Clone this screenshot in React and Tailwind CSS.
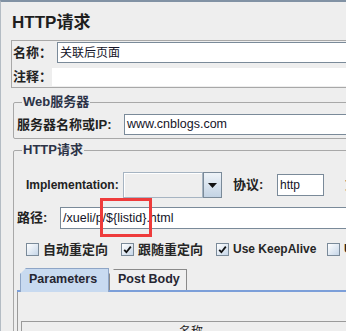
import React from "react";

const Field = ({ children, className = "" }) => (
  <div
    className={
      "flex items-center bg-white border border-[#7a8a99] px-[2px] text-[12.5px] text-[#141428] whitespace-nowrap overflow-hidden " +
      className
    }
  >
    {children}
  </div>
);

const CheckBox = ({ checked, label, className = "", textClass = "text-[13px]" }) => (
  <div className={"flex items-center gap-[4px] shrink-0 " + className}>
    <span className="w-[13px] h-[13px] border border-[#7a8a99] bg-linear-to-br from-white to-[#c6d6e8] flex items-center justify-center">
      {checked && (
        <svg width="9" height="9" viewBox="0 0 9 9">
          <path d="M1.2 4.8 L3.4 7.2 L7.8 1.6" stroke="#111" strokeWidth="1.8" fill="none" />
        </svg>
      )}
    </span>
    <span className={"leading-[15px] font-bold text-[#262626] whitespace-nowrap " + textClass}>{label}</span>
  </div>
);

export default function App() {
  return (
    <div className="w-[346px] h-[331px] overflow-hidden bg-[#eeeeee] border-t-2 border-t-[#8192a4] border-l border-l-[#b4bcc4] font-['Liberation_Sans','Noto_Sans_CJK_SC',sans-serif] text-[#222]">
      <div className="w-[440px]">
        {/* title */}
        <div className="pl-[11px] pt-[11px] h-[38px] text-[17px] leading-[20px] font-bold text-[#1e1e1e]">
          HTTP请求
        </div>

        {/* name / comment */}
        <div className="ml-[10px] h-[48px] border border-[#a8a8a8] pt-[1px]">
          <div className="flex items-center h-[21px]">
            <span className="w-[45px] pl-[1px] text-[13px] font-bold shrink-0">名称：</span>
            <Field className="flex-1 h-[21px] text-[12px]">关联后页面</Field>
          </div>
          <div className="flex items-center h-[18px] mt-[5px]">
            <span className="w-[40px] pl-[1px] text-[13px] font-bold shrink-0">注释：</span>
            <div className="flex-1 h-full bg-white" />
          </div>
        </div>

        {/* web server */}
        <fieldset className="mt-[7px] ml-[12px] border border-[#a8a8a8] rounded-[2px] px-[3px] pt-[5px] pb-[3px]">
          <legend className="ml-[5px] px-[1px] text-[13px] leading-[14px] font-bold text-[#2c3347]">Web服务器</legend>
          <div className="flex items-center h-[21px]">
            <span className="w-[107px] text-[13px] font-bold shrink-0">服务器名称或IP:</span>
            <Field className="flex-1 h-[21px]">www.cnblogs.com</Field>
          </div>
        </fieldset>

        {/* http request */}
        <fieldset className="mt-[4px] ml-[12px] border border-[#a8a8a8] rounded-[2px] px-[3px] pt-[15px]">
          <legend className="ml-[5px] px-[1px] text-[13px] leading-[14px] font-bold text-[#2c3347]">HTTP请求</legend>

          <div className="flex items-center h-[26px] pl-[9px]">
            <span className="w-[97px] text-[12px] font-bold shrink-0">Implementation:</span>
            <div className="flex w-[99px] h-[26px] shrink-0">
              <div className="flex-1 border border-[#a6b4c2] bg-[#eeeeee] shadow-[inset_1px_1px_0_#ffffff]" />
              <div className="w-[19px] border border-[#7a8a99] bg-linear-to-b from-[#eef3f8] to-[#c3d3e4] flex items-center justify-center">
                <svg width="9" height="5" viewBox="0 0 9 5">
                  <polygon points="0,0 9,0 4.5,5" fill="#111" />
                </svg>
              </div>
            </div>
            <span className="ml-[11px] w-[44px] text-[13px] font-bold shrink-0">协议:</span>
            <Field className="w-[47px] h-[22px] text-[12px] shrink-0">http</Field>
            <span className="ml-[21px] text-[13px] font-bold shrink-0">方法:</span>
          </div>

          <div className="relative flex items-center h-[22px] mt-[9px]">
            <span className="w-[43px] text-[13px] font-bold shrink-0">路径:</span>
            <Field className="flex-1 h-[22px]">/xueli/p/${"{listid}"}.html</Field>
            <div className="absolute left-[83px] top-[-9px] w-[52px] h-[39px] border-[3px] border-[#ee3b3b]" />
          </div>

          <div className="flex items-center h-[13px] mt-[14px] pl-[9px]">
            <CheckBox className="w-[95px]" label="自动重定向" />
            <CheckBox className="w-[95px]" checked label="跟随重定向" />
            <CheckBox className="w-[111px]" checked label="Use KeepAlive" textClass="text-[12px]" />
            <CheckBox label="Use multipart" textClass="text-[12px]" />
          </div>

          {/* tabs */}
          <div className="mt-[12px] h-[24px] flex items-end pl-[3px] border-b-2 border-[#7c9fd9]">
            <div className="relative z-10 -mb-[2px] w-[89px] h-[24px] bg-[#c8daf0] border border-b-0 border-[#8ea5c6] [clip-path:polygon(6px_0,100%_0,100%_100%,0_100%,0_6px)] pl-[8px] pt-[3px] text-[12.5px] leading-[15px] font-bold text-[#262632]">
              Parameters
            </div>
            <div className="w-[78px] h-[21px] bg-[#f0f0f0] border border-b-0 border-[#8a8a8a] [clip-path:polygon(5px_0,100%_0,100%_100%,0_100%,0_5px)] pl-[8px] pt-[2px] text-[12.5px] leading-[15px] font-bold text-[#262632]">
              Post Body
            </div>
          </div>
          <div className="border-l border-[#9a9a9a] h-[60px] pt-[29px] pl-[3px]">
            <div className="border-t border-l border-[#9a9a9a] h-[30px] pl-[157px] pt-[3px] text-[12px] leading-[14px]">
              名称
            </div>
          </div>
        </fieldset>
      </div>
    </div>
  );
}
